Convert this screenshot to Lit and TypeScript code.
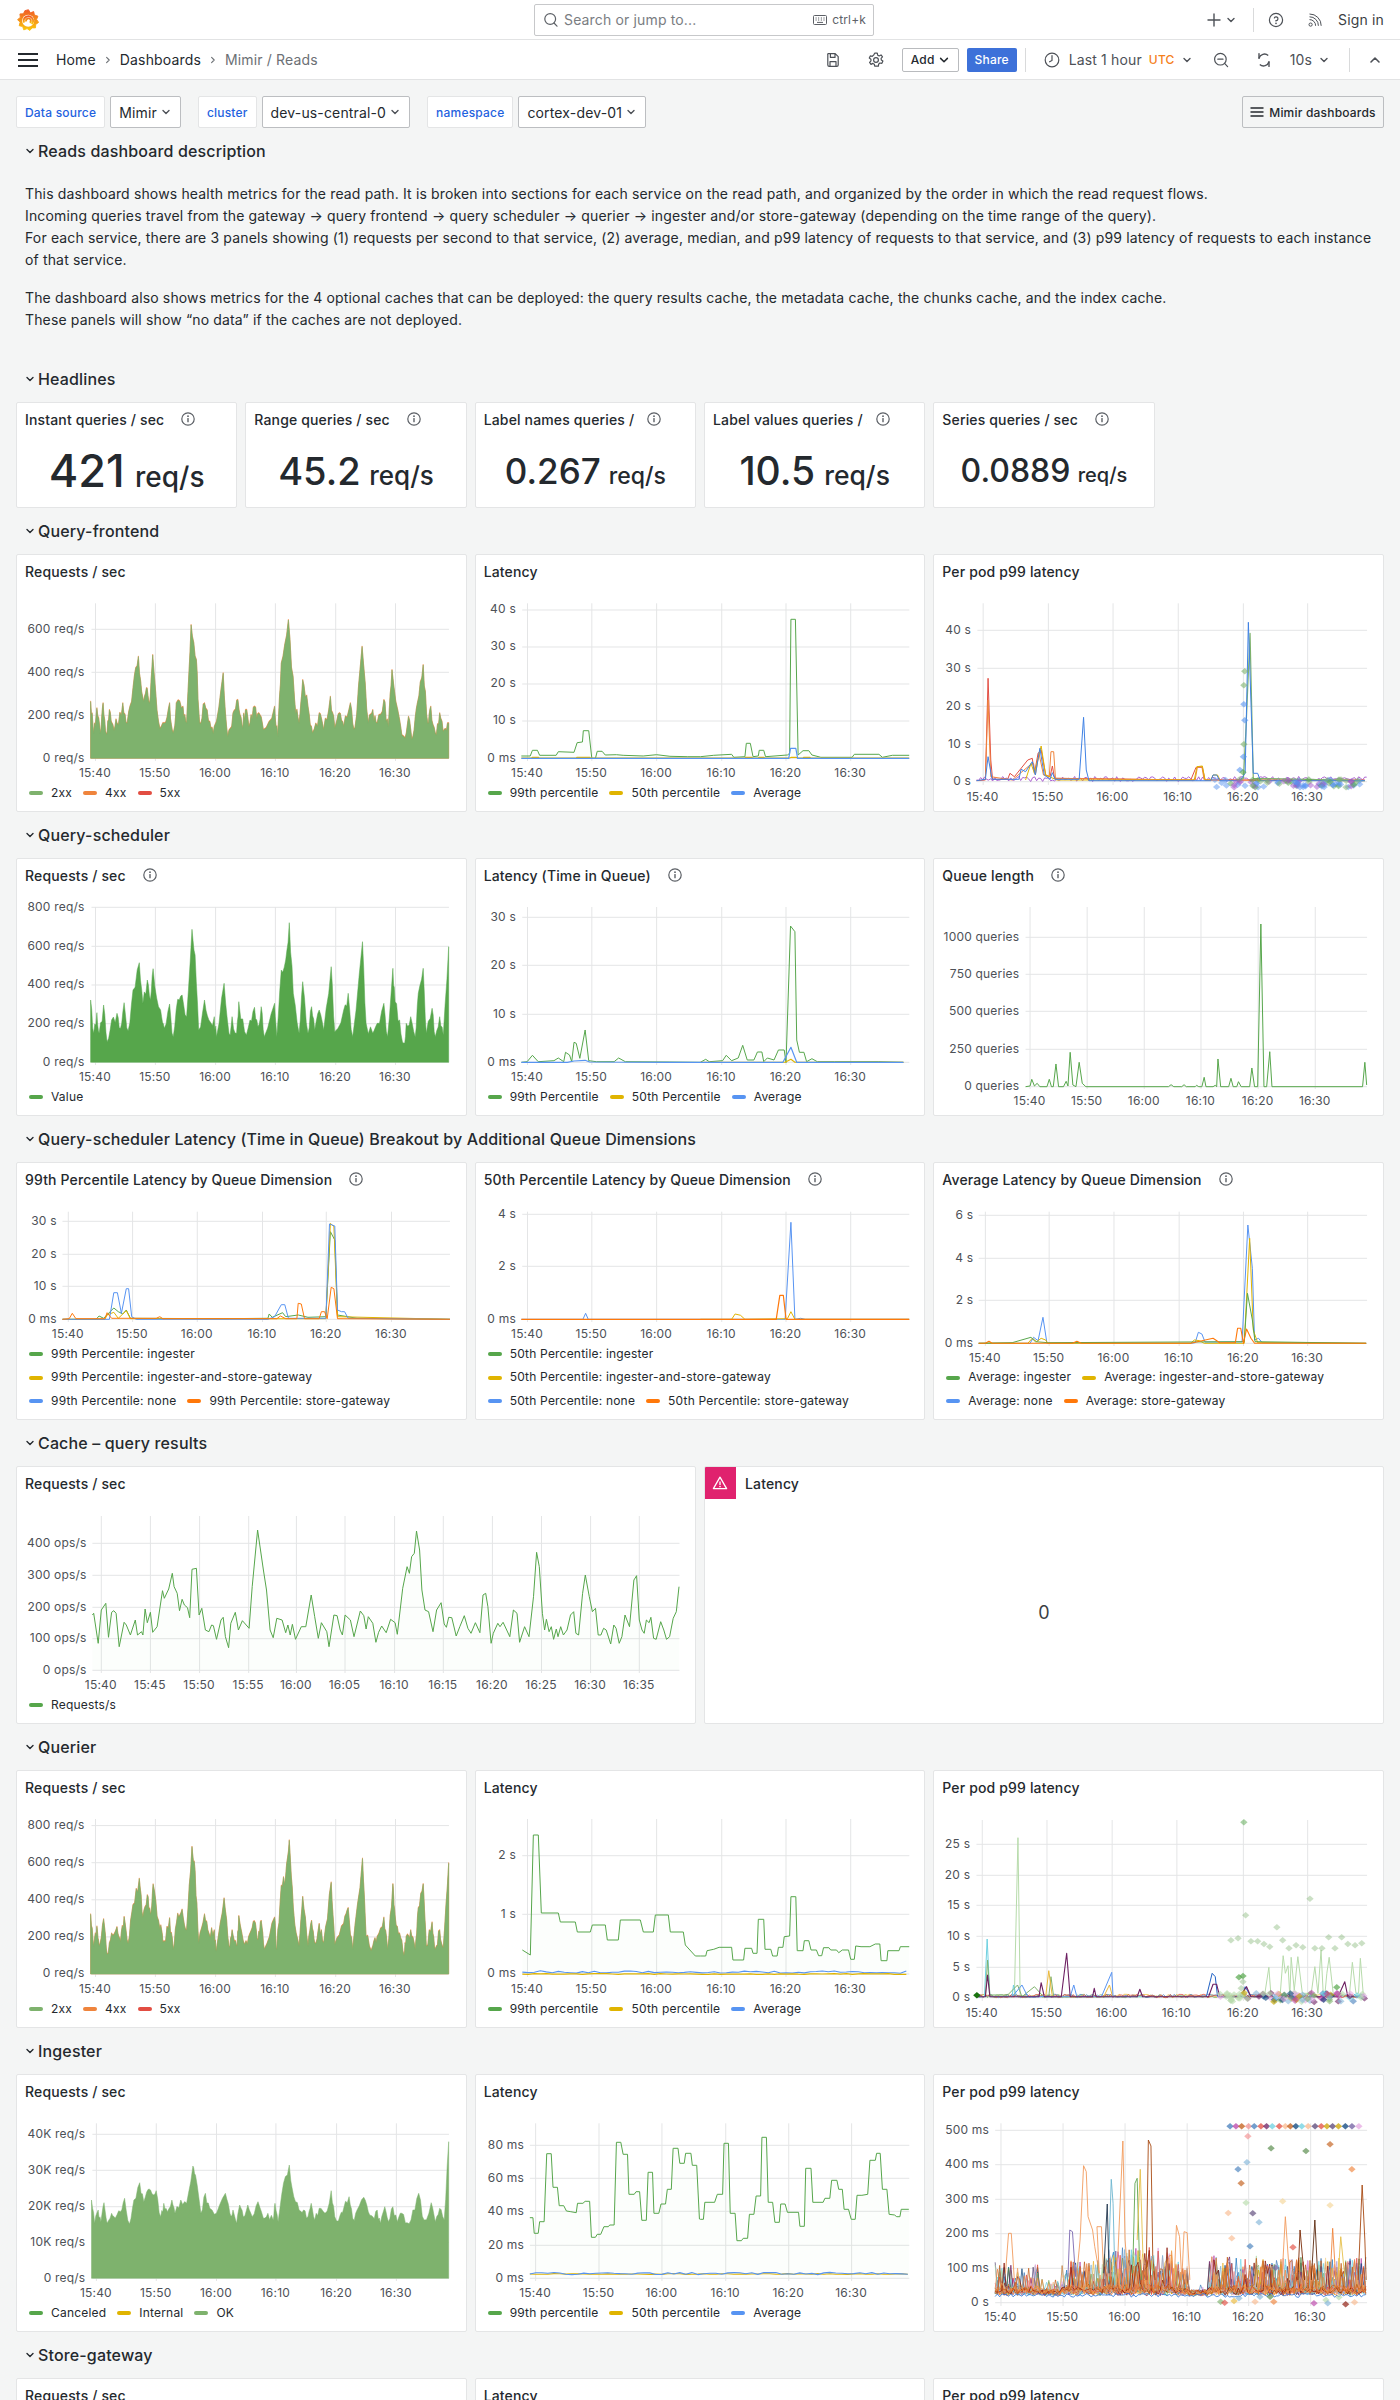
import { LitElement, html, css, svg, nothing } from 'lit';
import { customElement } from 'lit/decorators.js';

type Pt = [number, number];
const rng = (s: number) => () => {
  s |= 0; s = (s + 0x6d2b79f5) | 0;
  let t = Math.imul(s ^ (s >>> 15), 1 | s);
  t = (t + Math.imul(t ^ (t >>> 7), 61 | t)) ^ t;
  return ((t ^ (t >>> 14)) >>> 0) / 4294967296;
};
const Z = (ox: number, oy: number, a: number[]): Pt[] => {
  const o: Pt[] = [];
  for (let i = 0; i < a.length; i += 2) o.push([ox + a[i] / 2.24, oy + a[i + 1] / 3]);
  return o;
};
const jit = (p: Pt[], n: number, amp: number, seed: number): Pt[] => {
  const r = rng(seed);
  const o: Pt[] = [];
  for (let i = 0; i < p.length - 1; i++) {
    for (let k = 0; k < n; k++) {
      const f = k / n;
      o.push([p[i][0] + (p[i + 1][0] - p[i][0]) * f, p[i][1] + (p[i + 1][1] - p[i][1]) * f + (k ? (r() - 0.35) * amp : 0)]);
    }
  }
  o.push(p[p.length - 1]);
  return o;
};
const D = (p: Pt[]) => 'M' + p.map((q) => q[0].toFixed(1) + ' ' + q[1].toFixed(1)).join('L');
const wig = (x0: number, x1: number, y: number, amp: number, step: number, seed: number): Pt[] => {
  const r = rng(seed);
  const o: Pt[] = [];
  for (let x = x0; x <= x1; x += step) o.push([x, y + (r() - 0.5) * amp]);
  return o;
};

interface Series { c: string; p: Pt[]; fill?: string; w?: number; op?: number; fo?: number; base?: number; }
interface Dot { x: number; y: number; c: string; o: number; }
interface Chart {
  left: number; right: number; hl: number; top: number; bottom: number; lx: number; xly: number;
  y: [string, number][]; x: [string, number][]; s: Series[]; dots?: Dot[];
}
type Leg = [string, string];
interface Panel { title: string; info?: boolean; chart?: Chart; legend?: Leg[][]; }

const T6 = ['15:40', '15:50', '16:00', '16:10', '16:20', '16:30'];
const ticks = (xs: number[], labels = T6): [string, number][] => xs.map((x, i) => [labels[i], x]);
const G = '#56a64b', Y = '#e0b400', B = '#5794f2', O = '#ff780a', G2 = '#7eb26d', O2 = '#ef843c', R = '#e24d42';

const PAL = ['#7eb26d', '#eab839', '#6ed0e0', '#ef843c', '#e24d42', '#1f78c1', '#ba43a9', '#705da0', '#508642', '#cca300', '#447ebc', '#c15c17', '#890f02', '#0a437c', '#6d1f62', '#584477', '#b7dbab', '#f4d598', '#70dbed', '#f9ba8f', '#f29191', '#82b5d8', '#e5a8e2', '#aea2e0'];

// ---- traces
const qfTop = Z(0, 360, [203,1025,210,1120,217,1045,225,1120,231,1030,238,1120,245,1050,253,1095,262,1090,275,1030,285,1090,298,985,310,890,320,1015,328,985,335,1030,342,885,355,1085,368,1090,380,1030,388,1120,395,1030,410,1040,418,1090,428,795,440,900,447,1090,458,1030,470,1085,480,1100,500,940,510,1130,522,1060,533,1020,542,1095,550,1050,560,1090,570,1040,580,1060,590,1110,615,1040,622,1130,630,910,646,780,660,1020,670,1090,678,960,690,1040,700,1120,715,1060,725,1110,740,1010,750,1105,760,1060,770,1100,785,1030,795,1105,811,860,825,1090,835,1050,845,1090,860,1020,870,1100,878,930,895,1080,905,1130,915,1070,925,1130,935,1030,948,915,958,1090,965,1040,975,1120,985,1060,995,1110,1005,1090]);
const qsTop = Z(0, 820, [203,540,210,640,217,578,222,640,232,555,240,665,250,600,262,580,270,625,278,548,287,632,298,510,312,428,320,550,330,480,337,540,343,446,355,560,362,590,368,625,380,552,388,650,398,538,408,525,418,590,430,328,437,405,445,630,458,540,468,600,480,590,485,650,502,490,513,640,520,590,530,640,535,545,548,635,560,600,570,562,578,620,585,560,592,650,615,550,620,650,630,450,640,420,648,308,657,520,670,640,678,485,690,640,698,560,705,630,715,570,725,630,742,440,750,635,770,570,780,520,790,650,812,365,820,610,835,640,845,610,860,550,868,650,880,445,885,545,895,600,905,670,910,610,920,590,930,650,937,520,948,445,955,640,968,565,975,650,985,590,993,645,1005,380]);
const ingTop = Z(0, 2040, [205,480,212,550,220,510,226,545,233,488,240,550,250,520,258,535,270,515,279,475,290,552,300,480,313,428,322,485,332,448,340,460,350,452,360,530,367,490,375,515,385,480,392,520,405,480,418,490,432,378,438,405,450,520,460,460,470,505,485,520,505,460,515,520,522,510,530,550,537,495,545,530,555,495,565,530,578,485,590,535,600,520,612,540,616,490,623,545,635,430,648,375,658,470,670,510,680,510,690,530,697,490,705,540,715,505,728,520,742,452,750,530,762,525,770,505,782,470,790,535,800,510,815,472,825,515,835,530,845,510,852,550,862,500,870,545,880,500,890,545,900,520,912,548,925,510,938,460,950,540,966,488,975,545,985,505,995,540,1005,305]);
const cacheLine = Z(0, 1440, [207,525,210,520,220,610,227,510,237,490,243,592,250,517,255,512,260,520,267,620,278,547,283,555,292,585,303,540,308,585,317,575,320,585,325,507,330,548,337,517,342,577,352,560,364,452,368,475,378,447,386,400,390,440,397,460,402,512,408,478,413,495,420,503,425,533,430,388,440,385,446,525,452,505,460,570,468,575,474,555,478,557,485,598,495,540,500,532,505,590,512,623,517,550,527,517,534,570,543,542,558,565,565,440,577,270,590,390,597,450,605,570,612,593,620,535,632,540,640,578,645,555,650,585,655,553,662,598,675,560,685,560,697,465,705,530,713,595,720,548,732,575,737,620,748,525,755,527,762,570,767,585,773,525,785,540,793,590,807,513,815,527,820,567,825,530,835,550,842,607,848,577,855,558,865,578,875,538,885,548,890,583,902,445,912,380,917,400,922,350,928,340,933,273,940,330,945,450,952,510,960,515,970,575,978,510,988,488,995,552,1000,562,1005,532,1012,533,1022,588,1030,560,1040,527,1048,565,1055,580,1065,548,1075,578,1082,465,1088,460,1093,500,1100,610,1105,580,1115,550,1120,560,1127,547,1135,570,1142,590,1150,510,1158,520,1164,607,1175,560,1185,590,1195,470,1202,337,1208,380,1215,520,1220,570,1224,538,1230,575,1235,560,1240,598,1246,567,1250,590,1256,560,1262,585,1270,570,1278,525,1285,515,1290,580,1296,585,1305,460,1311,405,1320,470,1327,515,1334,505,1340,585,1346,585,1352,565,1358,570,1368,612,1375,555,1380,565,1387,610,1393,590,1400,525,1410,560,1420,420,1426,407,1432,540,1438,570,1443,580,1448,540,1454,548,1458,532,1464,595,1470,598,1480,545,1487,570,1493,598,1500,590,1508,535,1515,515,1521,440]);

const offs = (p: Pt[], dy: number): Pt[] => p.map((q) => [q[0], q[1] + dy]);
const area = (c: string, p: Pt[], base: number, extra: Partial<Series> = {}): Series => ({ c, p, fill: c, fo: 1, base, w: 0.5, ...extra });
const FAINT = 0.015;

// per pod - query frontend
const ppDots1: Dot[] = (() => {
  const r = rng(7);
  const o: Dot[] = [];
  const cs = [G2, B, '#a352cc', G, B];
  for (let i = 0; i < 95; i++) {
    const zx = 1150 + r() * 340;
    const zy = 1258 + r() * 24;
    o.push({ x: 700 + zx / 2.24, y: 360 + zy / 3, c: cs[Math.floor(r() * 5)], o: 0.5 });
  }
  ([[1221,934,G2],[1219,976,G2],[1219,1033,B],[1221,1081,B],[1219,1153,G2],[1218,1190,B],[1210,1230,B],[1217,1237,G]] as [number,number,string][]).forEach(([a, b, c]) => o.push({ x: 700 + a / 2.24, y: 360 + b / 3, c, o: 0.6 }));
  return o;
})();
const ppDots2: Dot[] = (() => {
  const r = rng(11);
  const o: Dot[] = [];
  ([[1367,476],[1223,526],[1293,562],[1190,601],[1206,595],[1235,604],[1250,604],[1264,612],[1277,620],[1306,601],[1320,625],[1336,616],[1351,622],[1378,625],[1394,625],[1409,592],[1423,625],[1438,592],[1452,612],[1468,616],[1483,610],[1213,745],[1217,725]] as Pt[]).forEach(([a, b]) => o.push({ x: 700 + a / 2.24, y: 1740 + b / 3, c: G2, o: 0.4 }));
  ([[1219,247,0.5],[1427,742,0.7],[1208,712,0.7],[1217,708,0.7]] as number[][]).forEach(([a, b, op]) => o.push({ x: 700 + a / 2.24, y: 1740 + b / 3, c: G, o: op }));
  o.push({ x: 700 + 621 / 2.24, y: 1740 + 766 / 3, c: '#19730e', o: 1 });
  const cs = ['#ba43a9', '#447ebc', '#cca300', G2, '#70dbed', '#e5a8e2', '#0a437c', '#6d1f62', '#b7dbab', '#82b5d8'];
  for (let i = 0; i < 110; i++) {
    const zx = 1165 + r() * 325;
    const zy = 758 + r() * 28;
    const c = zx < 1250 ? (r() < 0.7 ? '#b7dbab' : cs[Math.floor(r() * 10)]) : cs[Math.floor(r() * 10)];
    o.push({ x: 700 + zx / 2.24, y: 1740 + zy / 3, c, o: 0.6 });
  }
  return o;
})();
const ppDots3: Dot[] = (() => {
  const r = rng(21);
  const o: Dot[] = [];
  for (let zx = 1188; zx <= 1490; zx += 11 + r() * 5) o.push({ x: 700 + zx / 2.24, y: 2040 + 259 / 3, c: PAL[Math.floor(r() * PAL.length)], o: 0.75 });
  ([[1228,289,'#f29191'],[1280,325,'#508642'],[1358,333,'#508642'],[1412,313,'#c15c17'],[1226,367,'#82b5d8'],[1206,388,'#447ebc'],[1213,430,'#c15c17'],[1461,388,'#ef843c'],[1224,488,'#b7dbab'],[1306,484,'#f4d598'],[1412,496,'#f4d598'],[1184,519,'#f9ba8f'],[1239,520,'#584477'],[1253,547,'#82b5d8'],[1192,595,'#f9ba8f'],[1233,619,'#447ebc'],[1329,622,'#e24d42'],[1290,683,'#705da0'],[1167,785,'#7eb26d'],[1176,788,'#e24d42'],[1197,783,'#eab839'],[1208,775,'#82b5d8'],[1244,785,'#f9ba8f'],[1286,785,'#ef843c'],[1376,790,'#ba43a9'],[1403,780,'#b7dbab'],[1407,790,'#82b5d8'],[1447,793,'#890f02'],[1467,787,'#f9ba8f'],[1432,772,'#b7dbab'],[1255,770,'#82b5d8'],[1278,770,'#508642']] as [number,number,string][]).forEach(([a, b, c]) => o.push({ x: 700 + a / 2.24, y: 2040 + b / 3, c, o: 0.65 }));
  return o;
})();

const ingNoise: Series[] = (() => {
  const out: Series[] = [];
  const act = (x: number) => {
    if (x < 760) return 0.75;
    if (x < 810) return 0.3;
    if (x < 900) return 0.85;
    if (x < 1060) return 1.2;
    if (x < 1095) return 0.75;
    if (x < 1140) return 0.12;
    return 0.95;
  };
  const order = [...PAL, ...PAL.slice(0, 5), '#ef843c', '#c15c17', '#890f02', '#f29b5c', '#c15c17', '#ef843c'];
  order.forEach((c, i) => {
    const r = rng(100 + i * 13);
    const pts: number[] = [];
    for (let x = 662; x <= 1494; x += 5) {
      const a = act(x);
      let y = 768 - r() * 18 - r() * 18 * a;
      if (r() < 0.16 * a) y -= 15 + r() * 85 * a;
      pts.push(x, y);
    }
    out.push({ c, p: Z(700, 2040, pts), w: 0.85, op: 0.85 });
  });
  out.push({ c: '#2f75d6', p: Z(700, 2040, (() => { const r = rng(9); const a: number[] = []; for (let x = 662; x <= 1494; x += 5) a.push(x, 772 - r() * 12); return a; })()), w: 0.85 });
  const T: [string, number[]][] = [
    ['#f29b5c', [845,700,852,600,860,377,866,395,870,530,880,570,885,620,895,700,890,560,900,560,905,700]],
    ['#f29b5c', [930,700,937,640,948,303,953,600,960,720]],
    ['#a84a12', [1000,720,1005,300,1011,318,1015,650,1020,720]],
    ['#5fa650', [970,700,975,430,980,415,985,650,990,720]],
    ['#6db6cf', [915,700,922,418,926,490,930,700]],
    ['#24384f', [905,700,913,492,917,700]],
    ['#e5c04a', [980,600,987,388,993,650]],
    ['#7b68b0', [825,710,829,570,835,575,842,710]],
    ['#f29b5c', [1063,720,1068,556,1075,590,1080,720,1085,575,1092,578,1098,720]],
    ['#f29b5c', [685,700,692,580,698,580,705,720]],
    ['#f29b5c', [1305,700,1312,530,1322,720]],
    ['#7a2a06', [1340,720,1345,570,1355,720]],
    ['#5c2a10', [1370,720,1378,540,1385,720]],
    ['#a84a12', [1475,720,1484,435,1490,600,1493,720]],
    ['#ef843c', [1412,720,1418,565,1425,720]],
    ['#e5c04a', [1430,710,1436,590,1445,710]],
  ];
  T.forEach(([c, a]) => out.push({ c, p: Z(700, 2040, a), w: 0.9 }));
  return out;
})();

const ppNoise = (ox: number, oy: number, y: number, colors: string[], seedBase: number, x0: number, x1: number, amp: number): Series[] =>
  colors.map((c, i) => ({ c, p: wig(ox + x0 / 2.24, ox + x1 / 2.24, oy + y / 3, amp, 2.2, seedBase + i), w: 0.9, op: 0.85 }));

const panels: Record<string, Panel> = {
  qfReq: {
    title: 'Requests / sec',
    chart: {
      left: 90.2, right: 449, hl: 91.5, top: 603.3, bottom: 761, lx: 84.5, xly: 772.7,
      y: [['600 req/s', 629.3], ['400 req/s', 672.3], ['200 req/s', 715.3], ['0 req/s', 758.3]],
      x: ticks([95.5, 155.4, 215.6, 275.4, 335.7, 395.5]),
      s: [area(O2, offs(jit(qfTop, 4, 13, 3), -0.8), 758.3), area(G2, jit(qfTop, 4, 13, 3), 758.3)],
    },
    legend: [[['2xx', G2], ['4xx', O2], ['5xx', R]]],
  },
  qfLat: {
    title: 'Latency',
    chart: {
      left: 521, right: 909, hl: 521.9, top: 603.3, bottom: 761, lx: 515.6, xly: 772.7,
      y: [['40 s', 610], ['30 s', 647], ['20 s', 684], ['10 s', 721], ['0 ms', 758.3]],
      x: ticks([527.2, 591.5, 656.3, 721.4, 785.7, 850.4]),
      s: [
        { c: G, fill: G, fo: FAINT, base: 758.3, p: [...Z(0, 360, [1167,1188,1187,1188,1192,1171,1203,1171,1208,1186,1245,1186,1250,1175,1285,1177,1292,1148,1304,1146,1306,1112,1318,1112,1325,1195,1333,1195,1337,1174,1348,1174,1355,1185,1380,1184,1395,1186,1440,1188,1470,1184,1500,1189,1540,1190]), ...Z(700, 360, [0,1190,30,1186,70,1183,75,1192,100,1190,103,1150,112,1150,118,1190,130,1188,132,1171,142,1171,146,1190,195,1185,200,1180,203,778,213,778,219,1185,230,1172,243,1172,250,1185,270,1192,340,1192,345,1183,400,1183,408,1192,430,1186,468,1186])] },
        { c: Y, p: [...Z(0, 360, [1167,1194,1190,1194,1192,1192,1205,1192,1207,1194,1290,1194,1292,1192,1320,1192,1322,1194]), ...Z(700, 360, [0,1194,100,1194,102,1192,115,1192,117,1194,130,1194,132,1192,142,1192,144,1194,200,1194,204,1192,214,1192,218,1194,230,1194,232,1192,245,1192,247,1194,468,1194])], w: 1.2 },
        { c: B, p: [...Z(0, 360, [1167,1195,1300,1195]), ...Z(700, 360, [0,1195,198,1195,202,1165,214,1165,218,1195,468,1195])], w: 1.2 },
      ],
    },
    legend: [[['99th percentile', G], ['50th percentile', Y], ['Average', B]]],
  },
  qfPod: {
    title: 'Per pod p99 latency',
    chart: {
      left: 977, right: 1367.4, hl: 977.7, top: 603.3, bottom: 785, lx: 971.4, xly: 796.7,
      y: [['40 s', 630.3], ['30 s', 668.3], ['20 s', 706.3], ['10 s', 744.3], ['0 s', 781.7]],
      x: ticks([983.5, 1048.7, 1113.4, 1178.6, 1243.7, 1308]),
      dots: ppDots1,
      s: [
        { c: '#a352cc', p: wig(977, 1367, 779, 5, 2, 5), w: 0.9 },
        { c: R, p: Z(700, 360, [620,1262,640,1260,646,955,652,1200,656,1258,690,1258,695,1240,705,1250,735,1200,745,1195,750,1240,758,1180,765,1170,775,1245,785,1250,790,1218,795,1255,1100,1260,1112,1222,1126,1222,1132,1260,1490,1260]) },
        { c: O2, p: Z(700, 360, [640,1260,646,1020,652,1250,700,1260,740,1215,748,1210,752,1245,760,1180,770,1245,783,1250,787,1175,793,1175,797,1255,1110,1260,1115,1220,1125,1220,1130,1260,1490,1262]) },
        { c: Y, p: Z(700, 360, [730,1260,742,1210,750,1240,765,1158,775,1245,800,1260,1108,1260,1114,1220,1126,1218,1132,1260,1145,1260,1150,1245,1160,1245,1166,1262]) },
        { c: G2, p: Z(700, 360, [1205,1262,1218,1255,1224,1100,1233,820,1240,1255,1490,1262]), w: 1.2 },
        { c: '#3f82e4', p: Z(700, 360, [620,1262,640,1258,646,1190,655,1258,715,1258,720,1228,730,1235,745,1205,752,1245,762,1165,772,1245,785,1258,790,1238,796,1258,850,1258,860,1072,866,1230,872,1262,1145,1262,1150,1245,1158,1245,1165,1262,1210,1262,1222,1240,1229,787,1240,1240,1250,1240,1256,1262,1490,1262]), w: 1 },
      ],
    },
  },
  qsReq: {
    title: 'Requests / sec', info: true,
    chart: {
      left: 90.2, right: 449, hl: 91.5, top: 907, bottom: 1065, lx: 84.5, xly: 1076.7,
      y: [['800 req/s', 907.3], ['600 req/s', 946.3], ['400 req/s', 985], ['200 req/s', 1023.7], ['0 req/s', 1062.3]],
      x: ticks([95.5, 155.4, 215.6, 275.4, 335.7, 395.5]),
      s: [area(G, jit(qsTop, 3, 12, 9), 1062.3)],
    },
    legend: [[['Value', G]]],
  },
  qsLat: {
    title: 'Latency (Time in Queue)', info: true,
    chart: {
      left: 521, right: 909, hl: 521.9, top: 907, bottom: 1065, lx: 515.6, xly: 1076.7,
      y: [['30 s', 917.3], ['20 s', 965.3], ['10 s', 1014.3], ['0 ms', 1062.3]],
      x: ticks([527.2, 591.5, 656.3, 721.4, 785.7, 850.4]),
      s: [
        { c: G, fill: G, fo: FAINT, base: 1062.3, p: [...Z(0, 820, [1167,727,1180,725,1192,706,1205,725,1240,722,1250,714,1262,725,1266,697,1275,705,1280,725,1285,667,1290,670,1298,715,1310,630,1318,722,1335,725,1375,725,1385,714,1400,725,1500,726]), ...Z(700, 820, [0,727,12,718,20,725,50,722,58,706,70,722,85,714,95,676,105,720,120,720,128,696,138,696,142,725,150,714,165,720,175,690,188,690,192,728,202,318,212,335,216,660,222,697,232,697,238,725,250,716,262,725,300,725,400,725,455,727])] },
        { c: Y, p: Z(700, 820, [0,727,190,727,203,718,212,727,455,727]), w: 1.1 },
        { c: B, p: [...Z(0, 820, [1167,727,1270,727,1285,723,1310,721,1320,726,1500,727]), ...Z(700, 820, [0,727,185,727,203,682,216,727,455,727])], w: 1.2 },
      ],
    },
    legend: [[['99th Percentile', G], ['50th Percentile', Y], ['Average', B]]],
  },
  qsLen: {
    title: 'Queue length', info: true,
    chart: {
      left: 1025, right: 1367.4, hl: 1025.9, top: 907, bottom: 1089, lx: 1019.6, xly: 1100.7,
      y: [['1000 queries', 937.3], ['750 queries', 974.3], ['500 queries', 1011.3], ['250 queries', 1049.3], ['0 queries', 1086.7]],
      x: ticks([1030.4, 1087.5, 1144.6, 1201.3, 1258.5, 1315.6]),
      s: [{ c: G, fill: G, fo: FAINT, base: 1086.7, p: Z(700, 820, [730,800,740,798,744,778,750,798,756,790,762,800,778,800,783,778,788,800,792,800,798,732,804,800,815,800,821,784,825,798,830,697,836,795,843,800,850,727,857,790,865,800,1050,800,1056,794,1062,800,1080,800,1085,794,1090,800,1110,800,1113,796,1118,800,1125,800,1130,772,1134,800,1150,800,1155,796,1158,800,1161,717,1167,800,1185,800,1190,775,1195,800,1203,800,1207,785,1213,800,1232,800,1237,744,1243,800,1250,800,1257,312,1264,800,1270,800,1277,695,1282,800,1485,800,1490,727,1494,795]) }],
    },
  },
  qb99: {
    title: '99th Percentile Latency by Queue Dimension', info: true,
    chart: {
      left: 61, right: 450, hl: 62.5, top: 1211.7, bottom: 1322, lx: 56.7, xly: 1333.7,
      y: [['30 s', 1221.3], ['20 s', 1254.3], ['10 s', 1286.3], ['0 ms', 1319.3]],
      x: ticks([68.3, 132.6, 197.3, 262.5, 326.3, 391.5]),
      s: [
        { c: G, p: Z(0, 1130, [140,568,215,568,222,558,232,565,255,534,265,545,275,552,283,540,292,565,500,566,600,565,603,552,610,562,633,548,640,560,668,555,690,562,730,560,740,305,750,330,756,555,800,565,1008,568]) },
        { c: Y, p: Z(0, 1130, [140,568,235,568,240,555,255,547,265,565,275,552,283,542,292,566,445,566,470,566,730,566,740,280,748,290,756,560,1008,568]) },
        { c: B, p: Z(0, 1130, [140,568,245,568,255,488,263,488,272,550,283,476,288,476,295,560,305,568,515,568,600,568,615,560,630,524,638,524,646,565,700,565,730,565,738,282,750,288,756,540,765,545,772,545,780,565,1008,568]) },
        { c: O, p: Z(0, 1130, [140,568,155,566,162,550,170,566,235,566,240,548,250,565,350,565,358,560,365,566,620,566,628,558,640,566,665,566,668,520,675,522,682,566,715,566,720,545,727,545,733,566,742,472,748,476,756,566,1008,568]) },
      ],
    },
    legend: [[['99th Percentile: ingester', G]], [['99th Percentile: ingester-and-store-gateway', Y]], [['99th Percentile: none', B], ['99th Percentile: store-gateway', O]]],
  },
  qb50: {
    title: '50th Percentile Latency by Queue Dimension', info: true,
    chart: {
      left: 521, right: 909, hl: 521.9, top: 1211.7, bottom: 1322, lx: 515.6, xly: 1333.7,
      y: [['4 s', 1214.3], ['2 s', 1266.3], ['0 ms', 1319.3]],
      x: ticks([527.2, 591.5, 656.3, 721.4, 785.7, 850.4]),
      s: [
        { c: B, p: [...Z(0, 1130, [1167,568,1305,568,1311,550,1317,568,1500,568]), ...Z(700, 1130, [0,568,190,568,203,277,212,568,225,565,235,568,468,568])] },
        { c: Y, p: Z(700, 1130, [0,568,70,568,78,552,90,556,100,568,195,566,203,545,212,568,468,568]) },
        { c: O, p: [...Z(0, 1130, [1167,568,1560,568]), ...Z(700, 1130, [0,568,170,568,178,496,186,496,192,568,468,568])], w: 1.2 },
      ],
    },
    legend: [[['50th Percentile: ingester', G]], [['50th Percentile: ingester-and-store-gateway', Y]], [['50th Percentile: none', B], ['50th Percentile: store-gateway', O]]],
  },
  qbAvg: {
    title: 'Average Latency by Queue Dimension', info: true,
    chart: {
      left: 979, right: 1367.4, hl: 979, top: 1211.7, bottom: 1346, lx: 973.7, xly: 1357.7,
      y: [['6 s', 1215.3], ['4 s', 1258.3], ['2 s', 1300.3], ['0 ms', 1343.3]],
      x: ticks([985.7, 1049.5, 1114.3, 1179.5, 1243.8, 1308]),
      s: [
        { c: B, p: Z(700, 1130, [625,640,740,640,748,622,758,632,769,562,778,640,1100,640,1110,638,1117,607,1125,612,1132,636,1215,636,1228,285,1238,415,1243,630,1252,625,1260,638,1493,640]) },
        { c: Y, p: Z(700, 1130, [625,640,735,640,745,625,755,635,765,625,775,630,780,640,1100,640,1108,630,1120,632,1130,640,1220,640,1232,325,1240,600,1250,638,1493,640]) },
        { c: G, p: Z(700, 1130, [625,640,700,638,742,622,752,635,780,638,1220,635,1227,490,1238,570,1244,635,1493,640]) },
        { c: O, p: Z(700, 1130, [625,640,640,640,648,634,655,640,835,640,845,634,855,640,1100,640,1150,625,1165,638,1200,638,1205,595,1212,595,1218,640,1225,597,1235,625,1243,640,1493,640]), w: 1.1 },
      ],
    },
    legend: [[['Average: ingester', G], ['Average: ingester-and-store-gateway', Y]], [['Average: none', B], ['Average: store-gateway', O]]],
  },
  cacheReq: {
    title: 'Requests / sec',
    chart: {
      left: 91, right: 679.5, hl: 92.4, top: 1516, bottom: 1673, lx: 86.6, xly: 1684.7,
      y: [['400 ops/s', 1543.3], ['300 ops/s', 1575.3], ['200 ops/s', 1607.3], ['100 ops/s', 1638.7], ['0 ops/s', 1670.3]],
      x: ticks([101.3, 150.4, 199.6, 248.7, 296.4, 345, 394.6, 443.3, 492.4, 541.5, 590.6, 639.3], ['15:40', '15:45', '15:50', '15:55', '16:00', '16:05', '16:10', '16:15', '16:20', '16:25', '16:30', '16:35']),
      s: [{ c: G, fill: G, fo: FAINT, base: 1670.3, p: cacheLine }],
    },
    legend: [[['Requests/s', G]]],
  },
  qReq: {
    title: 'Requests / sec',
    chart: {
      left: 90.2, right: 449, hl: 91.5, top: 1819, bottom: 1977, lx: 84.5, xly: 1988.7,
      y: [['800 req/s', 1825.6], ['600 req/s', 1862.7], ['400 req/s', 1899.8], ['200 req/s', 1936.9], ['0 req/s', 1974]],
      x: ticks([95.5, 155.4, 215.6, 275.4, 335.7, 395.5]),
      s: (() => {
        const p = jit(qsTop, 4, 12, 17).map((q) => [q[0], 1974 - (1062.3 - q[1]) * 0.957] as Pt);
        return [area(O2, offs(p, -0.8), 1974), area(G2, p, 1974)];
      })(),
    },
    legend: [[['2xx', G2], ['4xx', O2], ['5xx', R]]],
  },
  qLat: {
    title: 'Latency',
    chart: {
      left: 521, right: 909, hl: 521.9, top: 1819, bottom: 1977, lx: 515.6, xly: 1988.7,
      y: [['2 s', 1855.7], ['1 s', 1914.3], ['0 ms', 1974]],
      x: ticks([527.2, 591.5, 656.3, 721.4, 785.7, 850.4]),
      s: [
        { c: G, fill: G, fo: FAINT, base: 1974, p: [[522, 1950], [530, 1955], [533, 1835], [538, 1835], [541, 1913], [558, 1913], [560, 1922], [575, 1922], [577, 1932], [590, 1932], [592, 1925], [605, 1925], [607, 1940], [618, 1940], [620, 1920], [640, 1920], [643, 1932], [653, 1932], [655, 1915], [668, 1915], [670, 1932], [683, 1932], [685, 1945], [695, 1956], ...Z(700, 1740, [0,648,12,648,15,632,30,628,42,622,70,622,73,660,97,660,100,625,115,625,118,640,127,640,130,538,142,538,145,628,158,628,162,648,172,648,175,622,185,622,188,590,200,588,203,470,214,470,217,632,230,632,233,602,243,602,248,630,260,630,265,647,272,647,276,623,288,623,292,630,305,630,310,638,318,630,332,630,337,658,345,658,348,618,360,620,380,620,392,612,402,612,405,662,418,662,420,632,445,632,448,620,468,620])] },
        { c: B, p: wig(522, 909, 1972, 2.4, 6, 33), w: 1.1 },
        { c: Y, p: wig(522, 909, 1974, 0.8, 6, 34), w: 1.2 },
      ],
    },
    legend: [[['99th percentile', G], ['50th percentile', Y], ['Average', B]]],
  },
  qPod: {
    title: 'Per pod p99 latency',
    chart: {
      left: 976.8, right: 1367.4, hl: 976.8, top: 1820, bottom: 2001, lx: 970.5, xly: 2012.7,
      y: [['25 s', 1844.3], ['20 s', 1875.3], ['15 s', 1905.3], ['10 s', 1936.3], ['5 s', 1967.3], ['0 s', 1997.7]],
      x: ticks([982.6, 1047.3, 1112.5, 1177.2, 1243.7, 1308]),
      dots: ppDots2,
      s: [
        { c: '#b7dbab', p: Z(700, 1740, [620,770,705,770,713,293,718,770,1265,770,1275,682,1280,770,1300,770,1307,647,1312,700,1318,677,1322,770,1325,652,1332,750,1340,650,1350,760,1370,760,1378,680,1385,760,1392,630,1397,770,1400,770,1405,700,1410,652,1420,770,1455,770,1462,667,1470,760,1476,760,1480,655,1487,770]), w: 1 },
        ...ppNoise(700, 1740, 768, ['#7eb26d', '#eab839', '#447ebc', '#e24d42'], 50, 620, 1490, 3.5),
        { c: '#6ed0e0', p: Z(700, 1740, [625,772,638,770,644,597,650,770,700,770,703,735,710,770,1000,770]) },
        { c: '#7eb26d', p: Z(700, 1740, [640,770,645,660,650,765,690,765,712,735,722,770,750,740,770,770,782,770,787,710,793,770,910,770,918,770]) },
        { c: '#eab839', p: Z(700, 1740, [775,770,782,692,790,770,905,770,918,735,925,770]) },
        { c: '#5794f2', p: Z(700, 1740, [700,770,722,735,735,770,830,770,838,735,845,770,900,770,923,697,926,770]) },
        { c: '#1f60c4', p: Z(700, 1740, [1135,770,1148,700,1155,710,1160,770,1215,770,1222,740,1235,770]) },
        { c: '#6d1f62', p: Z(700, 1740, [620,770,640,770,645,705,650,770,760,770,765,728,772,770,810,770,822,640,830,770,880,770,884,745,888,770,980,770,986,748,992,770,1140,770,1150,733,1158,733,1165,770,1210,770,1225,740,1235,770,1430,770,1445,725,1452,770,1490,770]), w: 1.1 },
      ],
    },
  },
  ingReq: {
    title: 'Requests / sec',
    chart: {
      left: 91.5, right: 449, hl: 92.4, top: 2123.3, bottom: 2281, lx: 85.3, xly: 2292.7,
      y: [['40K req/s', 2134.3], ['30K req/s', 2170.3], ['20K req/s', 2206.7], ['10K req/s', 2242.3], ['0 req/s', 2278.3]],
      x: ticks([96.4, 156.3, 216.5, 275.9, 336.6, 396.4]),
      s: [area(G2, jit(ingTop, 3, 9, 27), 2278.3)],
    },
    legend: [[['Canceled', G], ['Internal', Y], ['OK', G2]]],
  },
  ingLat: {
    title: 'Latency',
    chart: {
      left: 529, right: 909, hl: 529.5, top: 2123.3, bottom: 2281, lx: 523.7, xly: 2292.7,
      y: [['80 ms', 2145.3], ['60 ms', 2178.3], ['40 ms', 2211.3], ['20 ms', 2245.3], ['0 ms', 2278.3]],
      x: ticks([535.3, 598.7, 661.6, 725.4, 788.4, 851.3]),
      s: [
        { c: G, fill: G, fo: FAINT, base: 2278.3, p: [...Z(0, 2040, [1186,533,1193,533,1196,580,1205,580,1208,545,1218,545,1224,341,1234,341,1238,442,1248,442,1252,497,1262,497,1268,513,1278,515,1290,518,1293,490,1305,490,1310,484,1320,484,1324,592,1333,592,1337,583,1345,583,1352,560,1362,560,1365,555,1375,555,1380,307,1390,307,1395,343,1405,343,1408,463,1420,463,1424,455,1432,455,1437,541,1447,541,1451,397,1461,397,1464,520,1475,520,1480,492,1490,492,1494,448,1503,448,1507,325,1518,325,1522,370,1532,370,1535,340,1547,340,1550,376,1560,376,1566,537]), ...Z(700, 2040, [0,538,7,538,10,487,32,487,38,463,50,463,53,310,63,310,67,520,78,520,82,602,92,602,96,595,106,595,110,523,120,523,125,468,135,468,138,292,148,292,152,487,162,487,167,547,177,547,180,492,190,492,195,517,220,517,223,559,233,559,236,385,248,385,252,487,275,487,279,475,290,475,294,421,306,421,310,448,318,448,322,508,332,508,338,538,347,538,351,466,362,466,375,463,380,361,392,361,395,340,403,340,408,448,418,448,423,523,435,525,440,530,447,530,450,508,467,508])] },
        { c: Y, p: wig(529.5, 909, 2274, 0.8, 6, 61), w: 1.1 },
        { c: B, p: wig(529.5, 909, 2273.5, 2.2, 6, 62), w: 1.1 },
      ],
    },
    legend: [[['99th percentile', G], ['50th percentile', Y], ['Average', B]]],
  },
  ingPod: {
    title: 'Per pod p99 latency',
    chart: {
      left: 995.5, right: 1367.4, hl: 995.5, top: 2123.3, bottom: 2306, lx: 989.3, xly: 2316.7,
      y: [['500 ms', 2130.3], ['400 ms', 2164.7], ['300 ms', 2199.3], ['200 ms', 2233.7], ['100 ms', 2268.3], ['0 s', 2302.7]],
      x: ticks([1001.3, 1063.4, 1125.4, 1187.5, 1249, 1311]),
      dots: ppDots3,
      s: ingNoise,
    },
  },
};

const TOPS = { qf: 554, qs: 858, qb: 1162, cache: 1466, q: 1770, ing: 2074 };
const COL3 = [16, 474.67, 933.33];
const COL2 = [16, 704];

const renderChart = (c: Chart, px: number, py: number, w: number, h: number) => {
  const vb = `${px + 1} ${py + 36} ${w - 2} ${h}`;
  return html`<svg class="plot" width=${w - 2} height=${h} viewBox=${vb}>
    ${c.y.map(([, y]) => svg`<line x1=${c.hl} x2=${c.right} y1=${y} y2=${y} stroke="#e4e5e6" stroke-width="1"></line>`)}
    ${c.x.map(([, x]) => svg`<line x1=${x} x2=${x} y1=${c.top} y2=${c.bottom} stroke="#e4e5e6" stroke-width="1"></line>`)}
    ${c.y.map(([t, y]) => svg`<text class="ax" x=${c.lx} y=${y - 1} text-anchor="end" dominant-baseline="central">${t}</text>`)}
    ${c.x.map(([t, x]) => svg`<text class="ax" x=${x - 0.5} y=${c.xly} text-anchor="middle" dominant-baseline="central">${t}</text>`)}
    ${c.s.map((s) => {
      const d = D(s.p);
      if (s.fill) {
        const first = s.p[0], last = s.p[s.p.length - 1];
        const a = `${d}L${last[0].toFixed(1)} ${s.base}L${first[0].toFixed(1)} ${s.base}Z`;
        return s.fo === 1
          ? svg`<path d=${a} fill=${s.fill} stroke=${s.c} stroke-width=${s.w ?? 0.5}></path>`
          : svg`<path d=${a} fill=${s.fill} fill-opacity=${s.fo ?? 0.05}></path><path d=${d} fill="none" stroke=${s.c} stroke-width=${s.w ?? 1}></path>`;
      }
      return svg`<path d=${d} fill="none" stroke=${s.c} stroke-width=${s.w ?? 1} stroke-opacity=${s.op ?? 1} stroke-linejoin="round"></path>`;
    })}
    ${(c.dots ?? []).map((o) => svg`<path d=${`M${(o.x - 3.7).toFixed(1)} ${o.y.toFixed(1)}L${o.x.toFixed(1)} ${(o.y - 3.2).toFixed(1)}L${(o.x + 3.7).toFixed(1)} ${o.y.toFixed(1)}L${o.x.toFixed(1)} ${(o.y + 3.2).toFixed(1)}Z`} fill=${o.c} fill-opacity=${o.o}></path>`)}
  </svg>`;
};

const infoIcon = html`<svg class="info" width="16" height="16" viewBox="0 0 16 16"><circle cx="8" cy="8" r="6.2" fill="none" stroke="#5c6066" stroke-width="1.2"></circle><circle cx="8" cy="5.2" r=".9" fill="#5c6066"></circle><rect x="7.3" y="7" width="1.4" height="4.2" rx=".5" fill="#5c6066"></rect></svg>`;
const chev = html`<svg class="chev" width="12" height="12" viewBox="0 0 12 12"><path d="M3 4.6l3 3 3-3" fill="none" stroke="#4d5157" stroke-width="1.4" stroke-linecap="round" stroke-linejoin="round"></path></svg>`;
const rowChev = html`<svg class="rowchev" width="12" height="12" viewBox="0 0 12 12"><path d="M3 4.6l3 3 3-3" fill="none" stroke="#24292e" stroke-width="1.4" stroke-linecap="round" stroke-linejoin="round"></path></svg>`;

@customElement('app-root')
export class AppRoot extends LitElement {
  static styles = css`
    :host { display: block; width: 1400px; height: 2400px; overflow: hidden; background: #f4f5f5; font-family: Inter, 'Noto Sans', sans-serif; color: #24292e; letter-spacing: 0.15px; }
    * { box-sizing: border-box; }
    svg { display: block; flex: none; }
    .topbar { height: 39px; background: #fff; display: grid; grid-template-columns: 534px 340px 1fr; align-items: center; border-bottom: 1px solid #e2e3e4; box-sizing: content-box; }
    .logo { margin-left: 17px; }
    .search { height: 32px; border: 1px solid #c7c8ca; border-radius: 2px; background: #fff; display: flex; align-items: center; padding: 0 7px 0 8px; font-size: 14px; color: #7a7d82; }
    .search .ph { margin-left: 5px; flex: 1; }
    .search .kb { font-size: 12px; margin-left: 4px; color: #5e6268; }
    .tr { display: flex; align-items: center; justify-content: flex-end; padding-right: 16px; }
    .signin { font-size: 14px; font-weight: 400; color: #3b3f44; margin-left: 15px; }
    .vd { width: 1px; height: 24px; background: #d9dadb; }
    .ml3 { margin-left: 3px; } .ml6 { margin-left: 6px; } .ml7 { margin-left: 7px; } .ml8 { margin-left: 8px; } .ml9 { margin-left: 9px; }
    .ml14 { margin-left: 14px; } .ml16 { margin-left: 16px; } .ml17 { margin-left: 17px; } .ml18 { margin-left: 18px; } .ml19 { margin-left: 19px; } .ml20 { margin-left: 20px; }
    .ml23 { margin-left: 23px; } .ml27 { margin-left: 27px; }
    .toolbar { height: 39px; background: #fff; display: flex; align-items: center; padding: 0 17px 0 18px; border-bottom: 1px solid #e2e3e4; font-size: 14px; box-sizing: content-box; }
    .crumb { color: #24292e; }
    .crumb.last { color: #6c7075; }
    .grow { flex: 1; }
    .btn { height: 24px; font-size: 12px; font-weight: 450; letter-spacing: 0.2px; border-radius: 2px; display: flex; align-items: center; justify-content: center; }
    .add { width: 57px; border: 1px solid #b9bbbe; background: #fff; color: #24292e; gap: 3px; }
    .share { width: 50px; background: #3d71d9; color: #fff; }
    .range { color: #4d5157; }
    .utc { color: #f5801a; font-size: 12px; font-weight: 450; letter-spacing: 0.2px; }
    .page { padding: 16px 16px 0; }
    .vars { height: 32px; display: flex; align-items: stretch; margin-bottom: 8px; }
    .vl { background: #fff; border: 1px solid #e4e5e6; border-radius: 2px; font-size: 12px; font-weight: 450; letter-spacing: 0.2px; color: #1f62e0; padding: 0 8px; display: flex; align-items: center; }
    .vs { margin-left: 5px; background: #fff; border: 1px solid #bcbec1; border-radius: 2px; font-size: 14px; color: #24292e; padding: 0 8px; display: flex; align-items: center; gap: 3px; }
    .gap { width: 17px; }
    .dash { margin-left: auto; width: 142px; background: #f4f5f5; border: 1px solid #bcbec1; border-radius: 2px; font-size: 12px; font-weight: 450; letter-spacing: 0.2px; display: flex; align-items: center; justify-content: center; gap: 5px; }
    .row { height: 30px; display: flex; align-items: center; margin-bottom: 8px; padding-left: 8px; font-size: 16px; font-weight: 450; color: #24292e; }
    .rowchev { margin-right: 2px; }
    .desc { height: 182px; margin-bottom: 8px; padding: 9px; font-size: 14px; line-height: 22px; }
    .desc p { margin: 0 0 16px; }
    .grid3 { display: grid; grid-template-columns: repeat(3, 1fr); gap: 8px; margin-bottom: 8px; }
    .grid2 { display: grid; grid-template-columns: repeat(2, 1fr); gap: 8px; margin-bottom: 8px; }
    .grid6 { display: grid; grid-template-columns: repeat(6, 1fr); gap: 8px; margin-bottom: 8px; }
    .panel { height: 258px; background: #fff; border: 1px solid #e4e5e6; border-radius: 2px; display: flex; flex-direction: column; overflow: hidden; }
    .stat { height: 106px; }
    .ph2 { height: 32px; margin-bottom: 3px; flex: none; padding: 0 8px; display: flex; align-items: center; gap: 16px; font-size: 14px; font-weight: 450; color: #24292e; white-space: nowrap; }
    .ph2 .t.clip { width: 154.4px; overflow: hidden; margin-right: -8px; flex: none; }
    .err { width: 32px; height: 32px; background: #e0226e; display: flex; align-items: center; justify-content: center; margin: -1px 0 0 -1px; flex: none; }
    .errh { padding-left: 0; gap: 9px; }
    .zero { flex: 1; display: flex; align-items: center; justify-content: center; font-size: 18px; color: #3b3f44; }
    .plot { overflow: hidden; }
    .ax { font-family: Inter, sans-serif; font-size: 12px; fill: #4d5157; letter-spacing: 0.2px; }
    .legend { padding: 0 0 7px 12px; flex: none; }
    .lrow { height: 23.5px; display: flex; align-items: center; gap: 11px; font-size: 12px; letter-spacing: 0.2px; color: #24292e; }
    .li { display: flex; align-items: center; gap: 8px; white-space: nowrap; }
    .mk { width: 14px; height: 4px; border-radius: 2px; margin-top: 2px; }
    .sv { flex: 1; display: flex; align-items: center; justify-content: center; font-weight: 500; color: #24292e; letter-spacing: 0; padding-bottom: 4px; }
    .svi { display: flex; align-items: baseline; }
  `;

  private panel(key: string, px: number, py: number, w: number) {
    const p = panels[key];
    const rows = p.legend?.length ?? 0;
    const legendH = rows ? rows * 23.5 + 7 : 0;
    const h = 258 - 2 - 35 - legendH;
    return html`<div class="panel">
      <div class="ph2"><span class="t">${p.title}</span>${p.info ? infoIcon : nothing}</div>
      ${p.chart ? renderChart(p.chart, px, py, w, h) : nothing}
      ${p.legend ? html`<div class="legend">${p.legend.map((r) => html`<div class="lrow">${r.map(([t, c]) => html`<span class="li"><i class="mk" style="background:${c}"></i>${t}</span>`)}</div>`)}</div>` : nothing}
    </div>`;
  }

  private row3(a: string, b: string, c: string, y: number) {
    return html`<div class="grid3">${[a, b, c].map((k, i) => this.panel(k, COL3[i], y, 450.67))}</div>`;
  }

  private stat(t: string, v: string, vs: number, us: number, clip = false) {
    return html`<div class="panel stat">
      <div class="ph2"><span class="t ${clip ? 'clip' : ''}">${t}</span>${infoIcon}</div>
      <div class="sv"><div class="svi" style="gap:${(vs * 0.23).toFixed(1)}px"><span style="font-size:${vs}px;line-height:${Math.round(vs * 1.2)}px">${v}</span><span style="font-size:${us}px">req/s</span></div></div>
    </div>`;
  }

  private empty(t: string) {
    return html`<div class="panel"><div class="ph2"><span class="t">${t}</span></div></div>`;
  }

  render() {
    return html`
      <div class="topbar">
        <svg class="logo" width="22" height="24" viewBox="0 0 24 24">
          <defs><linearGradient id="lg" x1="0" y1="0" x2="0" y2="1"><stop offset="0" stop-color="#f05a28"></stop><stop offset="1" stop-color="#fbca0a"></stop></linearGradient></defs>
          <path d="M12.5 0.8L14.6 4.2L18.2 2.8L19 6.6L22.8 7.8L21.4 11.4L23.6 14.6L20.4 16.8L20.2 20.6L16.4 20.6L14 23.4L11 21.4L7.4 22.8L6.2 19.2L2.4 18.2L3.4 14.4L0.6 11.6L3.6 9.2L3.2 5.4L7 5.2L8.6 1.8Z" fill="url(#lg)" stroke="url(#lg)" stroke-width="1" stroke-linejoin="round"></path>
          <circle cx="12.2" cy="12.8" r="6.6" fill="#fff"></circle>
          <path d="M7.8 14.8A5 5 0 1 1 16 16.4M10 13.6A2.6 2.6 0 1 1 14 15" fill="none" stroke="url(#lg)" stroke-width="2"></path>
        </svg>
        <div class="search">
          <svg width="16" height="16" viewBox="0 0 16 16"><circle cx="7.2" cy="7" r="5.4" fill="none" stroke="#5c6066" stroke-width="1.2"></circle><path d="M11 11l3 3.2" stroke="#5c6066" stroke-width="1.2" stroke-linecap="round"></path></svg>
          <span class="ph">Search or jump to...</span>
          <svg width="16" height="14" viewBox="0 0 16 14"><rect x="1.5" y="2.5" width="13" height="9" rx="1" fill="none" stroke="#5c6066"></rect><path d="M3.5 5h1.2M6 5h1.2M8.8 5h1.2M11.4 5h1.2M3.5 7h1.2M6 7h1.2M8.8 7h1.2M11.4 7h1.2M5 9.4h6" stroke="#5c6066"></path></svg>
          <span class="kb">ctrl+k</span>
        </div>
        <div class="tr">
          <svg width="16" height="16" viewBox="0 0 16 16"><path d="M8 2v12M2 8h12" stroke="#4d5157" stroke-width="1.4" stroke-linecap="round"></path></svg>
          <span class="ml3">${chev}</span>
          <span class="vd ml16"></span>
          <svg class="ml14" width="16" height="16" viewBox="0 0 16 16"><circle cx="8" cy="8" r="6.6" fill="none" stroke="#4d5157" stroke-width="1.2"></circle><path d="M6.2 6.3A1.9 1.9 0 1 1 8 8.6v.8" fill="none" stroke="#4d5157" stroke-width="1.2"></path><circle cx="8" cy="11.4" r=".8" fill="#4d5157"></circle></svg>
          <svg class="ml23" width="16" height="16" viewBox="0 0 16 16"><circle cx="3.6" cy="12.6" r="1.6" fill="none" stroke="#4d5157"></circle><path d="M2.5 7.6A6 6 0 0 1 8.6 13.8M2.5 4.8A8.8 8.8 0 0 1 11.4 13.8M2.5 2A11.6 11.6 0 0 1 14.2 13.8" fill="none" stroke="#4d5157"></path></svg>
          <span class="signin">Sign in</span>
        </div>
      </div>
      <div class="toolbar">
        <svg width="20" height="16" viewBox="0 0 20 16"><path d="M0.5 2h19M0.5 8h19M0.5 14h19" stroke="#24292e" stroke-width="2" stroke-linecap="round"></path></svg>
        <span class="crumb ml18">Home</span><span class="ml7">${this.sep()}</span>
        <span class="crumb ml7">Dashboards</span><span class="ml7">${this.sep()}</span>
        <span class="crumb last ml7">Mimir / Reads</span>
        <span class="grow"></span>
        <svg width="16" height="16" viewBox="0 0 16 16"><path d="M3 1.6h7.2l3 3V13a1.4 1.4 0 0 1-1.4 1.4H4.2A1.4 1.4 0 0 1 2.8 13V3A1.4 1.4 0 0 1 3 1.6zM5.4 1.8v3.6h4.6V1.8M5 14.2V9.6h6v4.6" fill="none" stroke="#4d5157" stroke-width="1.2" stroke-linejoin="round"></path></svg>
        <svg class="ml27" width="16" height="16" viewBox="0 0 16 16"><circle cx="8" cy="8" r="2.4" fill="none" stroke="#4d5157" stroke-width="1.2"></circle><path d="M6.7 1.2h2.6l.4 2 1.5.7 1.8-1 1.5 2-1.4 1.4.2 1.7 1.6 1.1-1 2.2-2-.3-1.3 1.2-.2 2H6.7l-.4-2-1.4-.8-1.9 1-1.4-2.1 1.4-1.4-.1-1.7-1.6-1.1 1-2.2 2 .4 1.3-1.2z" fill="none" stroke="#4d5157" stroke-width="1.2" stroke-linejoin="round"></path></svg>
        <span class="btn add ml18">Add ${this.chevDark()}</span>
        <span class="btn share ml8">Share</span>
        <span class="vd ml8"></span>
        <svg class="ml18" width="16" height="16" viewBox="0 0 16 16"><circle cx="8" cy="8" r="6.8" fill="none" stroke="#4d5157" stroke-width="1.2"></circle><path d="M8 3.6V8.4L5.6 9.8" fill="none" stroke="#4d5157" stroke-width="1.2" stroke-linecap="round"></path></svg>
        <span class="range ml9">Last 1 hour</span>
        <span class="utc ml7">UTC</span>
        <span class="ml6">${chev}</span>
        <svg class="ml20" width="16" height="16" viewBox="0 0 16 16"><circle cx="7.4" cy="7.2" r="5.8" fill="none" stroke="#4d5157" stroke-width="1.2"></circle><path d="M11.6 11.4l3 3.2M4.8 7.2h5.2" stroke="#4d5157" stroke-width="1.2" stroke-linecap="round"></path></svg>
        <svg class="ml27" width="16" height="16" viewBox="0 0 16 16"><path d="M3 6.2A5.6 5.6 0 0 1 12.2 3.6M13 9.8A5.6 5.6 0 0 1 3.8 12.4" fill="none" stroke="#4d5157" stroke-width="1.4"></path><path d="M3 1.6v4.8M13 14.4V9.6" stroke="#4d5157" stroke-width="1.4" stroke-linecap="round"></path></svg>
        <span class="range ml18">10s</span>
        <span class="ml6">${chev}</span>
        <span class="vd ml19"></span>
        <svg class="ml17" width="16" height="16" viewBox="0 0 16 16"><path d="M4 10l4-4 4 4" fill="none" stroke="#4d5157" stroke-width="1.6" stroke-linecap="round" stroke-linejoin="round"></path></svg>
      </div>
      <div class="page">
        <div class="vars">
          <span class="vl">Data source</span><span class="vs">Mimir ${chev}</span><span class="gap"></span>
          <span class="vl">cluster</span><span class="vs">dev-us-central-0 ${chev}</span><span class="gap"></span>
          <span class="vl">namespace</span><span class="vs">cortex-dev-01 ${chev}</span>
          <span class="dash"><svg width="14" height="14" viewBox="0 0 14 14"><path d="M0.5 3h13M0.5 7h13M0.5 11h13" stroke="#24292e" stroke-width="1.3"></path></svg>Mimir dashboards</span>
        </div>
        <div class="row">${rowChev}Reads dashboard description</div>
        <div class="desc">
          <p>This dashboard shows health metrics for the read path. It is broken into sections for each service on the read path, and organized by the order in which the read request flows.<br>Incoming queries travel from the gateway → query frontend → query scheduler → querier → ingester and/or store-gateway (depending on the time range of the query).<br>For each service, there are 3 panels showing (1) requests per second to that service, (2) average, median, and p99 latency of requests to that service, and (3) p99 latency of requests to each instance<br>of that service.</p>
          <p>The dashboard also shows metrics for the 4 optional caches that can be deployed: the query results cache, the metadata cache, the chunks cache, and the index cache.<br>These panels will show “no data” if the caches are not deployed.</p>
        </div>
        <div class="row">${rowChev}Headlines</div>
        <div class="grid6">
          ${this.stat('Instant queries / sec', '421', 45, 28)}
          ${this.stat('Range queries / sec', '45.2', 38, 26)}
          ${this.stat('Label names queries / sec', '0.267', 35, 23, true)}
          ${this.stat('Label values queries / sec', '10.5', 39, 26.5, true)}
          ${this.stat('Series queries / sec', '0.0889', 32, 20)}
        </div>
        <div class="row">${rowChev}Query-frontend</div>
        ${this.row3('qfReq', 'qfLat', 'qfPod', TOPS.qf)}
        <div class="row">${rowChev}Query-scheduler</div>
        ${this.row3('qsReq', 'qsLat', 'qsLen', TOPS.qs)}
        <div class="row">${rowChev}Query-scheduler Latency (Time in Queue) Breakout by Additional Queue Dimensions</div>
        ${this.row3('qb99', 'qb50', 'qbAvg', TOPS.qb)}
        <div class="row">${rowChev}Cache – query results</div>
        <div class="grid2">
          ${this.panel('cacheReq', COL2[0], TOPS.cache, 680)}
          <div class="panel">
            <div class="ph2 errh"><span class="err"><svg width="16" height="16" viewBox="0 0 16 16"><path d="M8 2.2L14.6 13.6H1.4Z" fill="none" stroke="#fff" stroke-width="1.3" stroke-linejoin="round"></path><path d="M8 6.4v3.6" stroke="#fff" stroke-width="1.3"></path><circle cx="8" cy="11.6" r=".8" fill="#fff"></circle></svg></span><span class="t">Latency</span></div>
            <div class="zero">0</div>
          </div>
        </div>
        <div class="row">${rowChev}Querier</div>
        ${this.row3('qReq', 'qLat', 'qPod', TOPS.q)}
        <div class="row">${rowChev}Ingester</div>
        ${this.row3('ingReq', 'ingLat', 'ingPod', TOPS.ing)}
        <div class="row">${rowChev}Store-gateway</div>
        <div class="grid3">${this.empty('Requests / sec')}${this.empty('Latency')}${this.empty('Per pod p99 latency')}</div>
      </div>
    `;
  }

  private sep() {
    return html`<svg width="10" height="10" viewBox="0 0 10 10"><path d="M3.6 2.4L6.2 5 3.6 7.6" fill="none" stroke="#6c7075" stroke-width="1.1" stroke-linecap="round" stroke-linejoin="round"></path></svg>`;
  }
  private chevDark() {
    return html`<svg width="12" height="12" viewBox="0 0 12 12"><path d="M2.6 4.4L6 7.8l3.4-3.4" fill="none" stroke="#24292e" stroke-width="1.5" stroke-linecap="round" stroke-linejoin="round"></path></svg>`;
  }
}
